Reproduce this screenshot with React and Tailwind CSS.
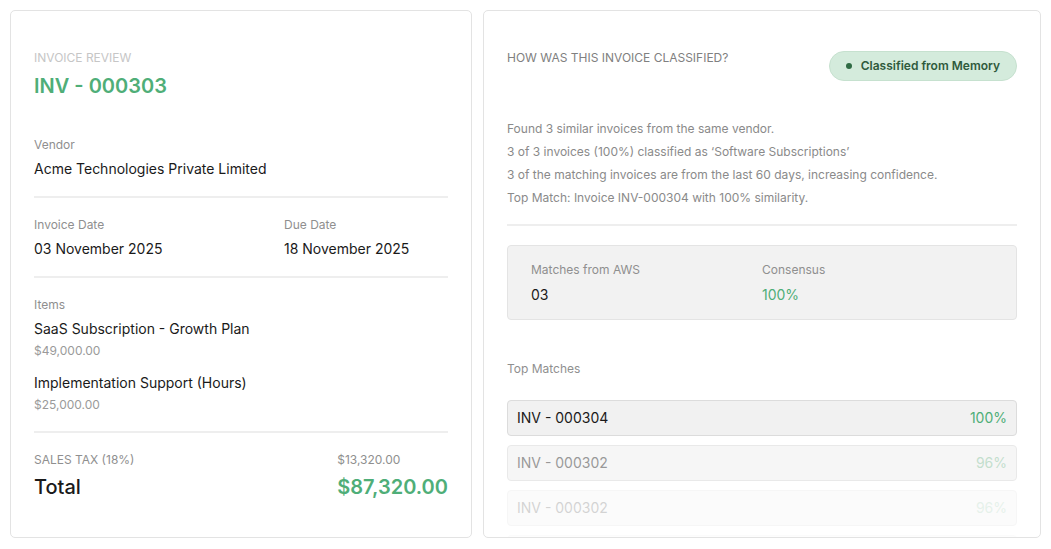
import React from 'react';

const items = [
  { name: 'SaaS Subscription - Growth Plan', price: '$49,000.00' },
  { name: 'Implementation Support (Hours)', price: '$25,000.00' },
];

const reasons = [
  'Found 3 similar invoices from the same vendor.',
  "3 of 3 invoices (100%) classified as \u2018Software Subscriptions\u2019",
  '3 of the matching invoices are from the last 60 days, increasing confidence.',
  'Top Match: Invoice INV-000304 with 100% similarity.',
];

const matches = [
  { id: 'INV - 000304', score: '100%', fade: 'opacity-100', strong: true },
  { id: 'INV - 000302', score: '96%', fade: 'opacity-60', strong: false },
  { id: 'INV - 000302', score: '96%', fade: 'opacity-25', strong: false },
  { id: '', score: '', fade: 'opacity-10', strong: false },
];

function Field({ label, value }) {
  return (
    <div>
      <p className="text-xs leading-4 text-[#8f8f8f]">{label}</p>
      <p className="mt-[6px] text-sm leading-5 text-[#1a1a1a]">{value}</p>
    </div>
  );
}

export default function App() {
  return (
    <div
      className="h-screen w-full bg-white flex gap-[11px] pt-[10px] px-[10px] pb-[11px]"
      style={{ fontFamily: 'Inter, "Noto Sans", sans-serif' }}
    >
      {/* Invoice card */}
      <div className="w-[462px] shrink-0 rounded-[5px] border border-[#e3e3e3] px-[23px] pt-[39px] flex flex-col">
        <div className="pb-[37px]">
          <p className="text-xs leading-4 text-[#c6c6c6] uppercase">Invoice Review</p>
          <h1 className="mt-[6px] text-xl leading-7 font-semibold text-[#4fae78]">INV - 000303</h1>
        </div>

        <div className="pb-[17px] border-b-2 border-[#eeeeee]">
          <Field label="Vendor" value="Acme Technologies Private Limited" />
        </div>

        <div className="pt-[19px] pb-[17px] border-b-2 border-[#eeeeee] grid grid-cols-[250px_1fr]">
          <Field label="Invoice Date" value="03 November 2025" />
          <Field label="Due Date" value="18 November 2025" />
        </div>

        <div className="pt-[19px] pb-[18px] border-b-2 border-[#eeeeee]">
          <p className="text-xs leading-4 text-[#8f8f8f]">Items</p>
          <div className="mt-[6px] flex flex-col gap-[14px]">
            {items.map(item => (
              <div key={item.name}>
                <p className="text-sm leading-5 text-[#1a1a1a]">{item.name}</p>
                <p className="mt-1 text-xs leading-4 text-[#9a9a9a]">{item.price}</p>
              </div>
            ))}
          </div>
        </div>

        {/* Totals */}
        <div className="pt-[19px] flex justify-between">
          <div>
            <p className="text-xs leading-4 text-[#8f8f8f]">SALES TAX (18%)</p>
            <p className="mt-[5px] text-xl leading-7 font-medium text-[#1a1a1a]">Total</p>
          </div>
          <div>
            <p className="text-xs leading-4 text-[#8f8f8f]">$13,320.00</p>
            <p className="mt-[5px] text-xl leading-7 font-semibold text-[#4fae78]">$87,320.00</p>
          </div>
        </div>
      </div>

      {/* Classification card */}
      <div className="flex-1 min-w-0 rounded-[5px] border border-[#e3e3e3] px-[23px] pt-[39px] overflow-hidden">
        <div className="flex justify-between items-start">
          <p className="text-xs leading-4 text-[#808080] uppercase">How was this invoice classified?</p>
          <span className="mt-px h-[30px] flex items-center gap-[9px] px-[16px] rounded-full bg-[#d4ebdc] border border-[#c6e1cf] text-xs font-semibold text-[#2f5a3d]">
            <span className="w-[6px] h-[6px] rounded-full bg-[#2f6b44]" />
            Classified from Memory
          </span>
        </div>

        <div className="mt-[36px] pb-[15px] border-b-2 border-[#eeeeee]">
          {reasons.map(line => (
            <p key={line} className="text-xs leading-[23px] text-[#8a8a8a]">{line}</p>
          ))}
        </div>

        <div className="mt-[19px] rounded-[4px] border border-[#e4e4e4] bg-[#f2f2f2] px-[23px] pt-4 pb-[14px] grid grid-cols-2">
          <div>
            <p className="text-xs leading-4 text-[#8f8f8f]">Matches from AWS</p>
            <p className="mt-[7px] text-sm leading-5 text-[#1a1a1a]">03</p>
          </div>
          <div>
            <p className="text-xs leading-4 text-[#8f8f8f]">Consensus</p>
            <p className="mt-[7px] text-sm leading-5 text-[#4fae78]">100%</p>
          </div>
        </div>

        <p className="mt-[41px] text-xs leading-4 text-[#8f8f8f]">Top Matches</p>

        <div className="mt-[23px] flex flex-col gap-[9px]">
          {matches.map((m, i) => (
            <div
              key={i}
              className={`${m.fade} h-[36px] flex items-center justify-between px-[9px] rounded-[4px] border border-[#dcdcdc] bg-[#f1f1f1]`}
            >
              <span className={`text-sm ${m.strong ? 'text-[#1a1a1a]' : 'text-[#555555]'}`}>{m.id}</span>
              <span className={`text-sm ${m.strong ? 'text-[#4fae78]' : 'text-[#9cc9ad]'}`}>{m.score}</span>
            </div>
          ))}
        </div>
      </div>
    </div>
  );
}
